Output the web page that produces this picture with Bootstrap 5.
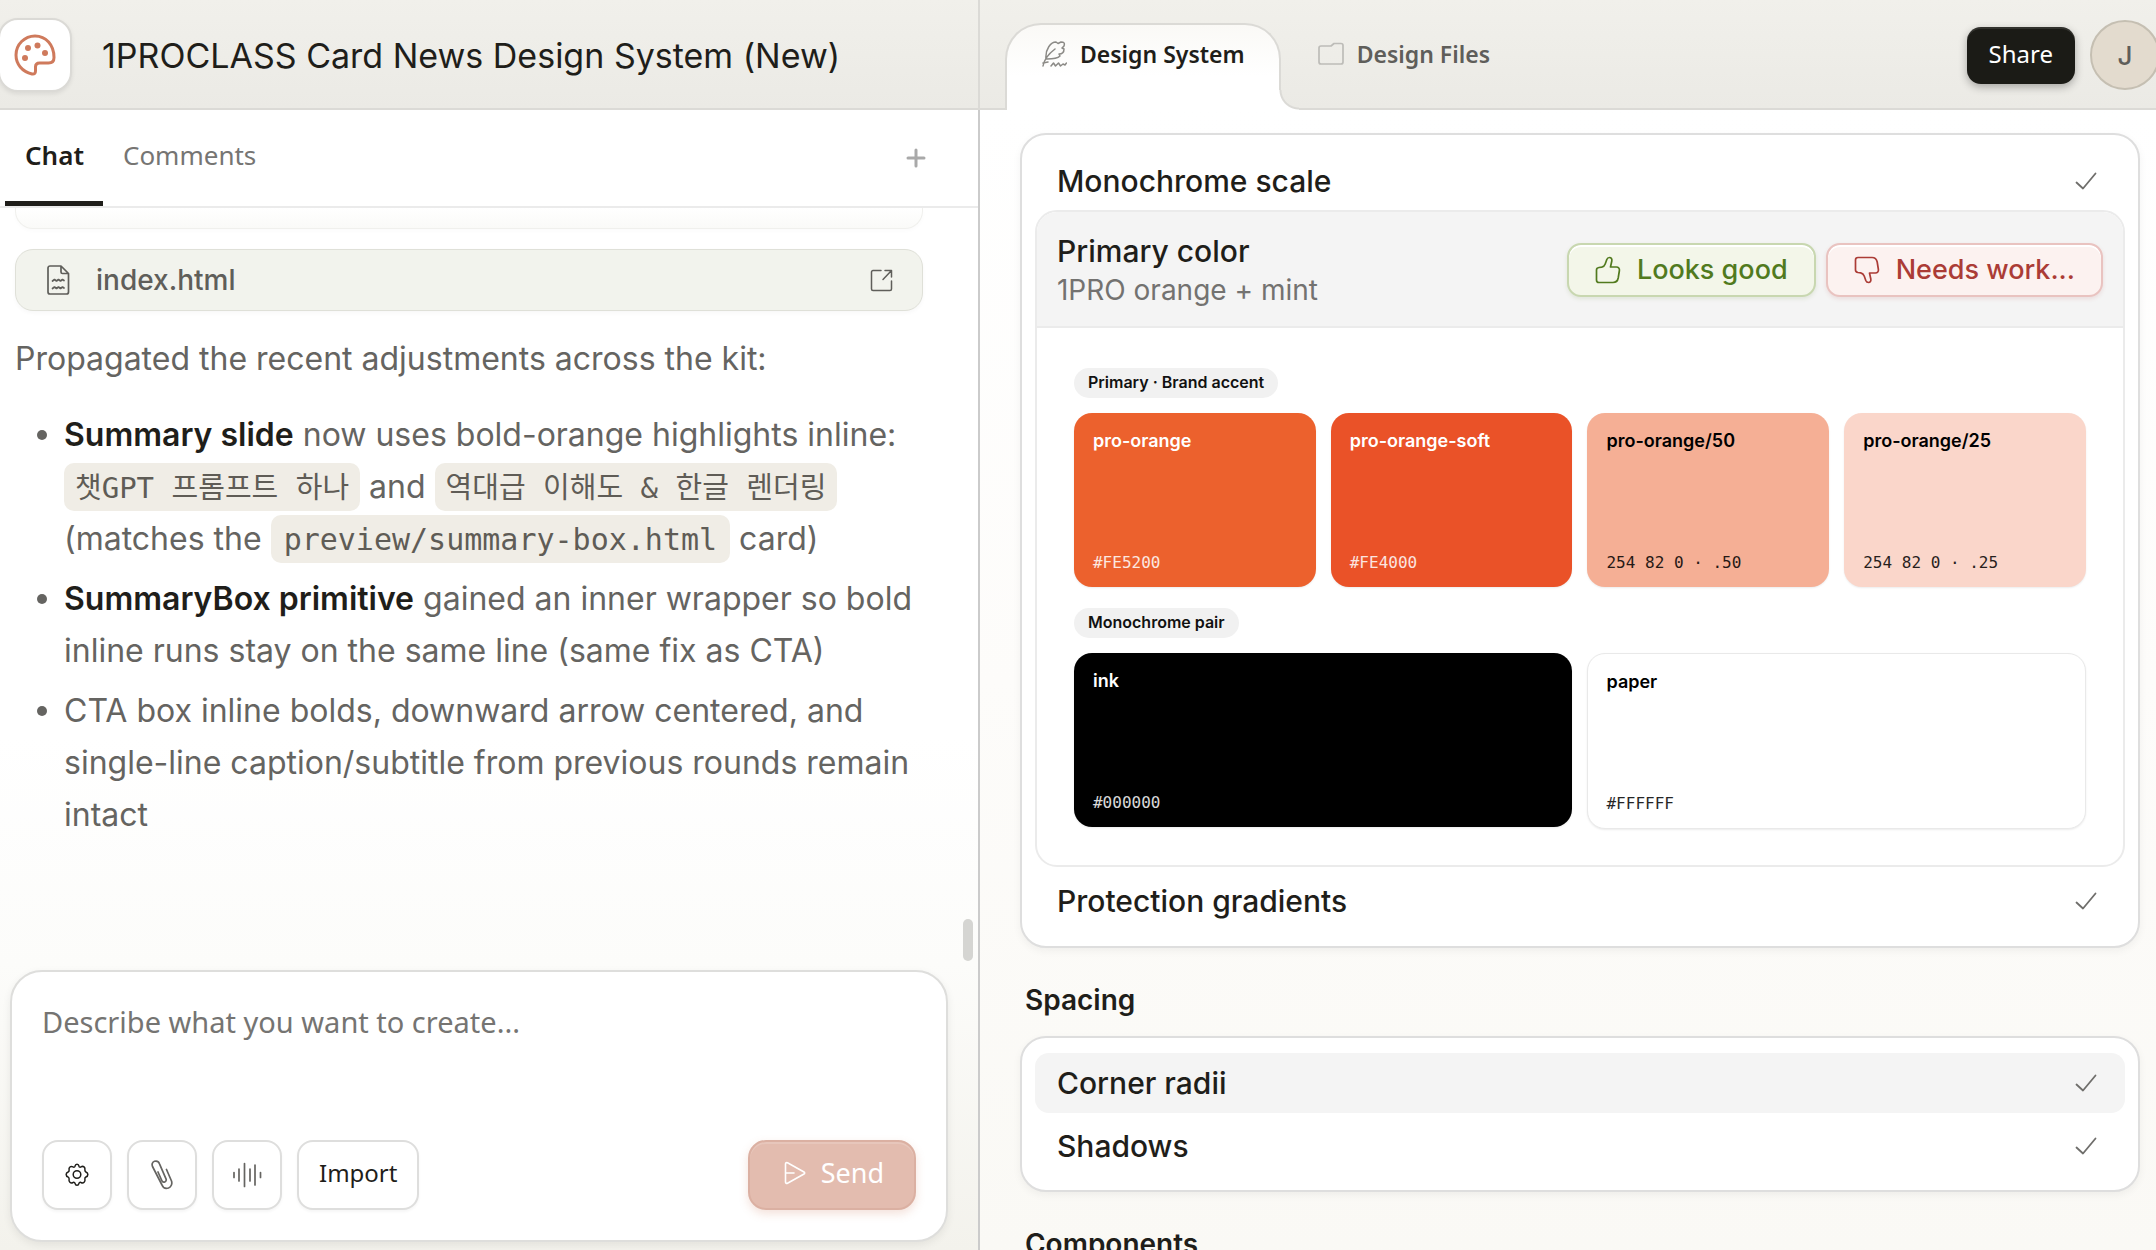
<!DOCTYPE html>
<html lang="en">
<head>
<meta charset="utf-8">
<meta name="viewport" content="width=device-width, initial-scale=1">
<title>1PROCLASS Card News Design System (New)</title>
<link href="https://cdn.jsdelivr.net/npm/bootstrap@5.3.0/dist/css/bootstrap.min.css" rel="stylesheet">
<style>
  :root { --ink:#1f1e1a; --muted:#656461; --line:#dbdad6; --ui:"Noto Sans","Noto Sans CJK KR",sans-serif; --mono:"DejaVu Sans Mono","Noto Sans CJK KR",monospace; }
  body { font-family:Inter,"Noto Sans CJK KR",sans-serif; color:var(--ink); background:#fff; }
  svg { fill:none; stroke:currentColor; stroke-linecap:round; stroke-linejoin:round; flex:none; display:block; }
  button { background:none; border:0; padding:0; color:inherit; }
  .ui-font { font-family:var(--ui); }

  .topbar { height:110px; flex:none; background:linear-gradient(#f1f0eb,#ebeae5); border-bottom:2px solid var(--line); }
  .pane-left { flex:0 0 45.4545%; min-width:0; border-right:2px solid #cbcbcb; }
  .topbar .pane-left { border-color:var(--line); }
  .topbar > div { padding-top:2px; }
  .logo-btn { width:74px; height:74px; margin-left:-2px; flex:none; background:#fff; border:2px solid var(--line); border-radius:20px; color:#cf7a5c; box-shadow:0 2px 4px rgba(0,0,0,.08); }
  .doc-title { font-size:34px; line-height:44px; font-weight:400; margin-left:30px; padding-top:2px; }

  .file-tab { height:87px; padding:0 34px 28px 35px; margin-bottom:-2px; border:2px solid transparent; border-bottom:0; font:600 23px/34px var(--ui); color:#5f5e5a; text-decoration:none; gap:13px; }
  .file-tab svg { color:#bdbcb8; }
  .file-tab.current { position:relative; color:var(--ink); margin-left:25px; background:linear-gradient(#faf9f6,#fff 60%); border-color:var(--line); border-radius:36px 36px 0 0; }
  .file-tab.current svg { color:#8b8a86; }
  .file-tab.current::after { content:""; position:absolute; right:-20px; bottom:0; width:20px; height:20px; background:radial-gradient(circle at 100% 0,transparent 17px,var(--line) 18px,var(--line) 19px,#fff 20px); }
  .share-btn { height:57px; padding:0 22px 2px; border-radius:14px; background:#1b1b16; color:#fff; font-size:24px; line-height:34px; box-shadow:0 3px 8px rgba(0,0,0,.3), inset 0 2px 0 rgba(255,255,255,.1); }
  .avatar { width:70px; height:70px; margin:0 -4px 0 15px; flex:none; border:2px solid #c5bfb2; background:#e3dbce; color:#5f5e5a; border-radius:50%; font-size:26px; font-weight:500; }

  .chat-pane { background:linear-gradient(#fff 55%,#fcfcfa 75%,#f3f2ec); }
  .chat-tabs { height:98px; flex:none; border-bottom:2px solid #ebebeb; padding:0 52px 0 5px; background:#fff; }
  .chat-tab { padding:27px 19px 28px 20px; height:96px; font:400 26px/36px var(--ui); color:#767573; border-bottom:5px solid transparent; }
  .chat-tab.current { font-weight:600; color:var(--ink); border-color:var(--ink); }
  .chat-log { padding:0 55px 0 15px; font-size:32px; line-height:52px; color:var(--muted); }
  .past-chip { height:21px; border:1px solid #f0f0ed; border-top:0; border-radius:0 0 18px 18px; background:linear-gradient(#fff,#fafaf8); margin-bottom:20px; box-shadow:0 2px 4px rgba(0,0,0,.02); }
  .file-chip { height:62px; padding:0 29px 0 31px; gap:26px; border:1px solid #dfe0d8; border-radius:18px; background:#f2f3ed; color:#5f5e5a; font-size:28px; font-weight:500; line-height:36px; text-decoration:none; margin-bottom:22px; box-shadow:0 2px 4px rgba(0,0,0,.03); }
  .chat-log ul { list-style:none; padding:0; margin:24px 0 0; }
  .chat-log li { padding-left:49px; margin-bottom:8px; position:relative; }
  .chat-log li::before { content:""; position:absolute; left:22px; top:21px; width:10px; height:10px; border-radius:50%; background:var(--muted); }
  .chat-log strong { font-weight:600; color:var(--ink); }
  .chat-log code { display:inline-block; height:48px; line-height:50px; vertical-align:bottom; margin-bottom:2px; padding:0 13px; border-radius:10px; background:#f0ede6; color:#5f5c56; font-family:var(--mono); font-size:30px; }
  .chat-log code:lang(ko) { font-size:29px; padding:0 11px; }
  .scroll-thumb { position:absolute; right:5px; bottom:289px; width:10px; height:42px; border-radius:5px; background:#d5d5d2; }

  .composer { margin:auto 30px 8px 10px; border:2px solid #dededc; border-radius:32px; background:#fff; padding:30px 30px; box-shadow:0 3px 8px rgba(0,0,0,.07); }
  .composer textarea { display:block; width:100%; height:138px; border:0; padding:0; resize:none; outline:0; font:400 29px/40px var(--ui); background:none; }
  .composer textarea::placeholder { color:#757472; opacity:1; }
  .tool-btn { min-width:70px; height:70px; border:2px solid #dededd; border-radius:16px; background:#fff; box-shadow:0 2px 3px rgba(0,0,0,.04); font-size:24px; line-height:34px; }
  .send-btn { height:70px; padding:0 30px 4px 34px; gap:15px; border:2px solid #dbb0a2; border-radius:18px; background:#e3bcaf; color:#fff; font-size:27px; line-height:36px; box-shadow:0 4px 10px rgba(207,122,92,.22), inset 0 2px 0 rgba(255,255,255,.15); }

  .system-pane { background:linear-gradient(#fff,#fdfcfa 50%,#faf9f5); padding:23px 16px 0 40px; overflow:hidden; }
  .sys-card { border:2px solid #dedede; border-radius:26px; background:#fff; box-shadow:0 3px 8px rgba(0,0,0,.05); padding:0 13px; }
  .sys-row { font-size:30px; line-height:40px; font-weight:500; width:100%; text-align:left; padding:0 28px 0 22px; }
  .sys-row svg { color:#6f6e6b; }
  .sys-row.active { background:#f4f4f4; border-radius:14px; }
  .panel-box { border:2px solid #ebebeb; border-radius:22px; overflow:hidden; }
  .panel-head { height:116px; background:#f4f4f4; border-bottom:2px solid #ebebeb; padding:2px 20px 0; }
  .panel-head h2 { font-size:30px; line-height:40px; font-weight:500; margin:0; }
  .panel-head p { font-size:28px; line-height:38px; color:#737270; margin:0; }
  .vote { height:54px; padding:0 26px; gap:16px; border:2px solid; border-radius:14px; font-size:27px; line-height:36px; font-weight:500; }
  .vote-good { background:#f3f6e9; border-color:#c8d7b0; color:#517a1e; box-shadow:0 2px 4px rgba(81,122,30,.12), inset 0 2px 0 #fff; }
  .vote-bad { background:#fcf2f0; border-color:#e9c3c0; color:#ab3c36; box-shadow:0 2px 4px rgba(171,60,54,.12), inset 0 2px 0 #fff; }
  .panel-content { padding:40px 37px 36px; }
  .pill-label { display:inline-block; vertical-align:top; height:30px; padding:0 14px; border-radius:15px; background:#f1f1f1; font-size:16px; line-height:29px; font-weight:600; color:#111; }
  .swatch { height:174px; border-radius:18px; padding:15px 19px 12px; color:#000; box-shadow:0 1px 2px rgba(0,0,0,.08); }
  .swatch b { font-size:18px; line-height:26px; font-weight:600; }
  .swatch span { font-family:var(--mono); font-size:16px; line-height:24px; opacity:.85; }
  .swatches { display:grid; grid-template-columns:repeat(4,minmax(0,1fr)); gap:15px; }
  .swatches.pair { grid-template-columns:repeat(2,minmax(0,1fr)); align-items:start; }
  .sw-orange { background:#ec612d; color:#fff; }
  .sw-soft { background:#ea5228; color:#fff; }
  .sw-50 { background:#f5af95; }
  .sw-25 { background:#fad6ca; }
  .sw-ink { background:#000; color:#fff; }
  .sw-paper { background:#fff; border:1px solid #e9e9e9; height:176px; padding-left:18px; }
  .group-title { font-size:28px; line-height:36px; font-weight:600; margin:0; padding-left:5px; }
</style>
<script src="https://cdn.jsdelivr.net/npm/bootstrap@5.3.0/dist/js/bootstrap.bundle.min.js"></script>
</head>
<body class="vh-100 d-flex flex-column overflow-hidden">
<svg class="d-none">
  <symbol id="check" viewBox="0 0 22 18"><path d="M1.5 10.5 8 16.5 20.5 1.5"/></symbol>
</svg>

<header class="topbar d-flex">
  <div class="pane-left d-flex align-items-center">
    <button class="logo-btn d-flex align-items-center justify-content-center" aria-label="Home">
      <svg width="44" height="44" viewBox="0 0 44 44" stroke-width="3"><path d="M22 3C11.500 3 3 11.500 3 22c0 9 6 16.500 16 19 2.500.5 3.500-1 3.500-3v-4c0-2.500 1.500-4 4-4h9c3.500 0 5.500-2 5.500-5.500C41 12 33 3 22 3z"/><g fill="currentColor" stroke="none"><circle cx="15" cy="15" r="3"/><circle cx="24.500" cy="12.500" r="3"/><circle cx="32" cy="20" r="3"/><circle cx="12" cy="25" r="3"/></g></svg>
    </button>
    <h1 class="doc-title mb-0 text-nowrap">1PROCLASS Card News Design System (New)</h1>
  </div>
  <div class="d-flex flex-grow-1 align-items-center">
    <nav class="d-flex align-self-end">
      <a href="#" class="file-tab current d-flex align-items-center">
        <svg width="25" height="26" viewBox="0 0 25 26" stroke-width="1.500"><path d="M1 25C2 19 5 14 13 8M4 18C3 8 9 1 14 1l2 1.500L19 1c3 0 4 1 3 4l-2 2 2 1c0 3-2 5-5 5l1 2c-3 3-8 3-13 3M9 25l2.500-3 2 3 3-3 2 3 2.500-2 2 1 1.500-2M1 22l5-1"/></svg>
        Design System
      </a>
      <a href="#" class="file-tab d-flex align-items-center">
        <svg width="26" height="26" viewBox="0 0 26 26" stroke-width="1.700"><path d="M3 5h10l3-2.500h7a2 2 0 0 1 2 2V21a2 2 0 0 1-2 2H3a2 2 0 0 1-2-2V7a2 2 0 0 1 2-2z"/></svg>
        Design Files
      </a>
    </nav>
    <button class="share-btn ui-font ms-auto">Share</button>
    <button class="avatar">J</button>
  </div>
</header>

<main class="d-flex flex-grow-1" style="min-height:0">
  <section class="pane-left chat-pane d-flex flex-column position-relative">
    <div class="chat-tabs d-flex align-items-center">
      <button class="chat-tab current">Chat</button>
      <button class="chat-tab">Comments</button>
      <button class="ms-auto" aria-label="New chat" style="color:#a9a9a9"><svg width="20" height="20" viewBox="0 0 20 20" stroke-width="3"><path d="M10 2v16M2 10h16"/></svg></button>
    </div>
    <div class="chat-log">
      <div class="past-chip"></div>
      <a href="#" class="file-chip d-flex align-items-center">
        <svg width="23" height="30" viewBox="0 0 23 30" stroke-width="1.700"><path d="M3 1h11l7.500 7.500V27a2 2 0 0 1-2 2H3a2 2 0 0 1-2-2V3a2 2 0 0 1 2-2zM14 1v6a1.500 1.500 0 0 0 1.500 1.500h6M5.500 16l2-1.500 2 1.500 2-1.500 2 1.500 2-1.500 1.500 1M5.500 23.500l2-1.500 2 1.500 2-1.500 2 1.500 2-1.500 1.500 1"/></svg>
        index.html
        <svg class="ms-auto" width="23" height="23" viewBox="0 0 23 23" stroke-width="1.500"><path d="M11 1.500H3A1.500 1.500 0 0 0 1.500 3v17A1.500 1.500 0 0 0 3 21.500h17a1.500 1.500 0 0 0 1.500-1.500v-8M15 1.500h6.500V8M21.500 1.500l-8.500 9"/></svg>
      </a>
      <p class="mb-0">Propagated the recent adjustments across the kit:</p>
      <ul>
        <li><strong>Summary slide</strong> now uses bold-orange highlights inline: <code lang="ko">챗GPT 프롬프트 하나</code> and <code lang="ko">역대급 이해도 &amp; 한글 렌더링</code> (matches the <code>preview/summary-box.html</code> card)</li>
        <li><strong>SummaryBox primitive</strong> gained an inner wrapper so bold inline runs stay on the same line (same fix as CTA)</li>
        <li>CTA box inline bolds, downward arrow centered, and single-line caption/subtitle from previous rounds remain intact</li>
      </ul>
    </div>
    <div class="scroll-thumb"></div>
    <form class="composer">
      <textarea aria-label="Message" placeholder="Describe what you want to create..."></textarea>
      <div class="d-flex align-items-center" style="gap:15px">
        <button type="button" class="tool-btn d-flex align-items-center justify-content-center" aria-label="Settings">
          <svg width="24" height="24" viewBox="0 0 24 24" stroke-width="1.500"><path d="M10 3.200C10.500.5 13.500.5 14 3.200c.3 1 1.200 1.200 2 .7 2.300-1.500 4.400.6 3.900 2.800-.2 1 .2 1.800 1 2.300 2.600.8 2.600 4.200 0 5-.9.500-1.200 1.200-1 2.100.6 2.600-1.400 4.700-3.900 3.400-.9-.5-1.600-.2-2 .8-.6 2.700-3.400 2.700-4 0-.4-1-1.200-1.300-2-.8-2.500 1.300-4.500-.8-3.900-3.200.2-1-.1-1.700-1-2.300-2.600-.8-2.600-4.200 0-5 .9-.5 1.200-1.300 1-2.200C3.500 4.500 5.700 2.500 8 3.900c.9.500 1.700.2 2-.7z"/><circle cx="12" cy="11.500" r="3.800"/></svg>
        </button>
        <button type="button" class="tool-btn d-flex align-items-center justify-content-center" aria-label="Attach" style="color:#656461">
          <svg width="24" height="30" viewBox="0 0 24 30" stroke-width="1.700"><path d="M16.500 9.500 21.500 21c1 3-.5 6-3 7-3 1-5.500-.5-6.500-3L2.500 6.500C1.500 4 2.500 2 4.500 1.300c2.500-.8 4.200.5 5 2.500l6.500 15c.5 1.500 0 2.700-1.200 3.200-1.300.5-2.500-.2-3-1.500L8 12"/></svg>
        </button>
        <button type="button" class="tool-btn d-flex align-items-center justify-content-center" aria-label="Voice" style="color:#656461">
          <svg width="30" height="26" viewBox="0 0 30 26" stroke-width="1.700"><path d="M2 10.500v5M7 7v12M12.500 1.500v23M18 7v12M23 3v20M28.500 10.500v5"/></svg>
        </button>
        <button type="button" class="tool-btn ui-font" style="padding:0 20px 4px">Import</button>
        <button type="button" class="send-btn ui-font d-flex align-items-center ms-auto">
          <svg width="22" height="24" viewBox="0 0 22 24" stroke-width="1.600"><path d="M1.500 3v18c0 1.300 1 1.700 2 1.200L20 13c.9-.5.9-1.500 0-2L3.500 1.800c-1-.5-2-.1-2 1.200zM2 12h8"/></svg>
          Send
        </button>
      </div>
    </form>
  </section>

  <section class="system-pane flex-grow-1" style="min-width:0">
    <div class="sys-card">
      <button class="sys-row d-flex align-items-center justify-content-between" style="height:75px;padding-top:16px">Monochrome scale<svg width="22" height="18" stroke-width="1.800"><use href="#check"/></svg></button>
      <div class="panel-box">
        <div class="panel-head d-flex align-items-center">
          <div class="me-auto"><h2>Primary color</h2><p>1PRO orange + mint</p></div>
          <div class="d-flex" style="gap:10px">
            <button class="vote vote-good d-flex align-items-center"><svg width="26" height="28" viewBox="0 0 26 28" stroke-width="1.700"><path d="M1.500 14v10c0 1.500.8 2.500 2.500 2.500h14c2.800 0 4.600-1.500 5.200-4.500l1.200-7.500c.3-2-1-3.500-3-3.500H15.500l1.300-6c.4-2-.6-3.500-2.300-3.500-1.300 0-2.200.7-2.700 2L10.200 8c-.6 1.700-1.700 2.800-3.500 3.200L4 11.500c-1.700.3-2.500 1.200-2.500 2.500z"/></svg>Looks good</button>
            <button class="vote vote-bad d-flex align-items-center"><svg width="26" height="28" viewBox="0 0 26 28" stroke-width="1.700"><path d="M1.500 14V4c0-1.500.8-2.500 2.500-2.500h14c2.800 0 4.600 1.500 5.200 4.500l1.200 7.500c.3 2-1 3.500-3 3.500H15.500l1.300 6c.4 2-.6 3.500-2.300 3.500-1.300 0-2.200-.7-2.700-2L10.200 20c-.6-1.700-1.700-2.800-3.500-3.200L4 16.500C2.300 16.200 1.500 15.300 1.500 14z"/></svg>Needs work...</button>
          </div>
        </div>
        <div class="panel-content">
          <span class="pill-label">Primary · Brand accent</span>
          <div class="swatches" style="margin:15px 0 21px">
            <div class="swatch sw-orange d-flex flex-column justify-content-between"><b>pro-orange</b><span>#FE5200</span></div>
            <div class="swatch sw-soft d-flex flex-column justify-content-between"><b>pro-orange-soft</b><span>#FE4000</span></div>
            <div class="swatch sw-50 d-flex flex-column justify-content-between"><b>pro-orange/50</b><span>254 82 0 · .50</span></div>
            <div class="swatch sw-25 d-flex flex-column justify-content-between"><b>pro-orange/25</b><span>254 82 0 · .25</span></div>
          </div>
          <span class="pill-label">Monochrome pair</span>
          <div class="swatches pair" style="margin-top:15px">
            <div class="swatch sw-ink d-flex flex-column justify-content-between"><b>ink</b><span>#000000</span></div>
            <div class="swatch sw-paper d-flex flex-column justify-content-between"><b>paper</b><span>#FFFFFF</span></div>
          </div>
        </div>
      </div>
      <button class="sys-row d-flex align-items-center justify-content-between" style="height:79px;padding-bottom:12px">Protection gradients<svg width="22" height="18" stroke-width="1.800"><use href="#check"/></svg></button>
    </div>

    <h2 class="group-title" style="margin:34px 0 18px">Spacing</h2>
    <div class="sys-card" style="padding-top:15px;padding-bottom:14px">
      <button class="sys-row active d-flex align-items-center justify-content-between" style="height:60px;margin-bottom:3px">Corner radii<svg width="22" height="18" stroke-width="1.800"><use href="#check"/></svg></button>
      <button class="sys-row d-flex align-items-center justify-content-between" style="height:60px">Shadows<svg width="22" height="18" stroke-width="1.800"><use href="#check"/></svg></button>
    </div>
    <h2 class="group-title" style="margin-top:34px">Components</h2>
  </section>
</main>
</body>
</html>
